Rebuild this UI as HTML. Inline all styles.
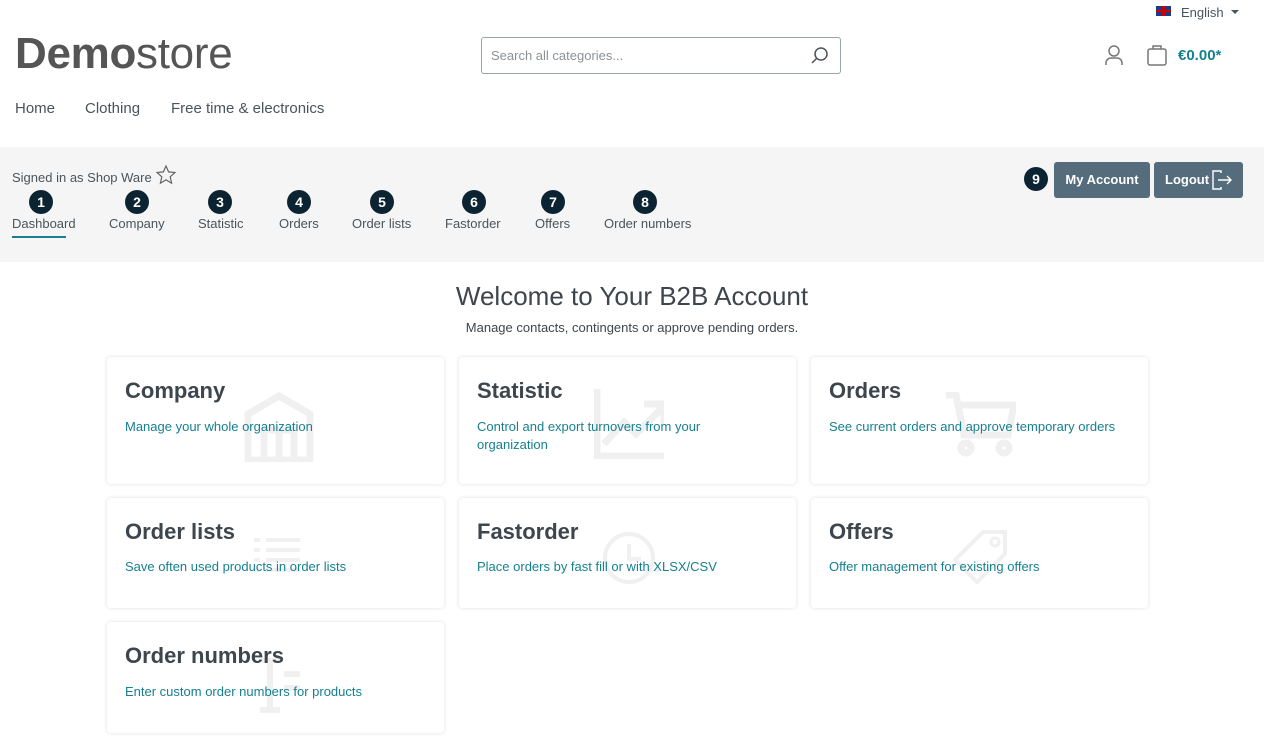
<!DOCTYPE html>
<html><head><meta charset="utf-8"><style>
*{box-sizing:border-box;margin:0;padding:0}
body{width:1264px;height:744px;overflow:hidden;background:#fff;font-family:"Liberation Sans",sans-serif;color:#4a545b;position:relative}
.a{position:absolute}
.logo{left:15px;top:29px;font-size:44px;color:#555;letter-spacing:-0.3px}
.logo b{font-weight:bold}
.nav{top:100px;font-size:15px;color:#4a545b}
.search{left:481px;top:37px;width:360px;height:37px;border:1px solid #9ba3a9;border-radius:3px;font-size:13px;color:#8a9196;padding:10px 9px}
.band{left:0;top:147px;width:1264px;height:115px;background:#f5f5f5}
.badge{width:24px;height:24px;border-radius:50%;background:#0c2431;color:#fff;font-weight:bold;font-size:14px;text-align:center;line-height:24px}
.tab{font-size:13px;top:216px;color:#4a545b}
.btn{top:162px;height:36px;background:#546c7c;color:#fff;font-weight:bold;font-size:13px;border-radius:3px;line-height:36px;text-align:center}
.card{background:#fff;border-radius:4px;box-shadow:0 0 4px rgba(0,0,0,.13);width:337px;overflow:hidden}
.card h3{position:absolute;left:18px;top:21px;font-size:22px;font-weight:bold;color:#3d464d}
.card p{position:absolute;left:18px;font-size:13px;color:#17808f;line-height:18px}
.card svg{position:absolute;stroke:#f0f0f0;fill:none;stroke-width:7}
</style></head><body>
<div class="a" style="left:1156px;top:6px;width:15px;height:10px;background:#1a3a8a"><div style="position:absolute;left:6px;top:0;width:3px;height:10px;background:#c00"></div><div style="position:absolute;left:0;top:4px;width:15px;height:2px;background:#c00"></div></div>
<div class="a" style="left:1181px;top:5px;font-size:13px;color:#4a545b">English</div>
<div class="a" style="left:1231px;top:10px;border:4px solid transparent;border-top:4px solid #4a545b"></div>
<div class="a logo"><b>Demo</b>store</div>
<div class="a search">Search all categories...</div>
<svg class="a" style="left:810px;top:46px" width="20" height="20" viewBox="0 0 20 20" fill="none" stroke="#4a545b" stroke-width="1.5"><circle cx="11" cy="8" r="6"/><path d="M7 12l-5 5"/></svg>
<svg class="a" style="left:1103px;top:44px" width="22" height="22" viewBox="0 0 22 22" fill="none" stroke="#777" stroke-width="1.5"><circle cx="11" cy="7" r="5"/><path d="M3 21v-2a5 5 0 0 1 5-5h6a5 5 0 0 1 5 5v2"/></svg>
<svg class="a" style="left:1146px;top:43px" width="22" height="24" viewBox="0 0 22 24" fill="none" stroke="#777" stroke-width="1.5"><rect x="2" y="6" width="18" height="16" rx="2"/><path d="M7 6V3h8v3"/></svg>
<div class="a" style="left:1178px;top:47px;font-size:15px;font-weight:bold;color:#17808f">€0.00*</div>
<div class="a nav" style="left:15px">Home</div>
<div class="a nav" style="left:85px">Clothing</div>
<div class="a nav" style="left:171px">Free time &amp; electronics</div>
<div class="a band"></div>
<div class="a" style="left:12px;top:170px;font-size:13px">Signed in as Shop Ware</div>
<svg class="a" style="left:156px;top:165px" width="20" height="20" viewBox="0 0 20 20" fill="none" stroke="#666" stroke-width="1.2"><path d="M10 1l2.6 5.9 6.4.6-4.8 4.3 1.4 6.3L10 14.8 4.4 18.1l1.4-6.3L1 7.5l6.4-.6z"/></svg>
<div class="a badge" style="left:29px;top:190px">1</div><div class="a tab" style="left:12px">Dashboard</div>
<div class="a" style="left:12px;top:236px;width:54px;height:2px;background:#17808f"></div>
<div class="a badge" style="left:125px;top:190px">2</div><div class="a tab" style="left:109px">Company</div>
<div class="a badge" style="left:208px;top:190px">3</div><div class="a tab" style="left:198px">Statistic</div>
<div class="a badge" style="left:287px;top:190px">4</div><div class="a tab" style="left:279px">Orders</div>
<div class="a badge" style="left:370px;top:190px">5</div><div class="a tab" style="left:352px">Order lists</div>
<div class="a badge" style="left:462px;top:190px">6</div><div class="a tab" style="left:445px">Fastorder</div>
<div class="a badge" style="left:541px;top:190px">7</div><div class="a tab" style="left:535px">Offers</div>
<div class="a badge" style="left:633px;top:190px">8</div><div class="a tab" style="left:604px">Order numbers</div>
<div class="a badge" style="left:1024px;top:167px">9</div>
<div class="a btn" style="left:1054px;width:96px">My Account</div>
<div class="a btn" style="left:1154px;width:89px;text-align:left;padding-left:11px">Logout</div>
<svg class="a" style="left:1211px;top:169px" width="22" height="22" viewBox="0 0 22 22" fill="none" stroke="#fff" stroke-width="1.4"><path d="M10 4V2H2v18h8v-2M7 11h13M16 7l4 4-4 4"/></svg>
<div class="a" style="left:0;top:281px;width:1264px;text-align:center;font-size:26px;color:#3d464d">Welcome to Your B2B Account</div>
<div class="a" style="left:0;top:320px;width:1264px;text-align:center;font-size:13px;color:#3d464d">Manage contacts, contingents or approve pending orders.</div>

<div class="a card" style="left:107px;top:357px;height:127px"><svg style="left:137px;top:35px" width="70" height="70" viewBox="0 0 70 70"><path d="M4 68V22L35 4l31 18v46H4zM20 68V38h30v30M35 40v28"/></svg><h3>Company</h3><p style="top:61px">Manage your whole organization</p></div>
<div class="a card" style="left:459px;top:357px;height:127px"><svg style="left:135px;top:32px" width="70" height="70" viewBox="0 0 70 70"><path d="M3 0v67h67M10 55l20-22 12 12 26-26M50 15h20v20"/></svg><h3>Statistic</h3><p style="top:61px">Control and export turnovers from your<br>organization</p></div>
<div class="a card" style="left:811px;top:357px;height:127px"><svg style="left:133px;top:35px" width="72" height="65" viewBox="0 0 72 65"><path d="M2 3h10l8 40h44l6-30H15"/><circle cx="22" cy="56" r="5"/><circle cx="60" cy="56" r="5"/></svg><h3>Orders</h3><p style="top:61px">See current orders and approve temporary orders</p></div>
<div class="a card" style="left:107px;top:498px;height:110px"><svg style="left:145px;top:38px" width="50" height="40" viewBox="0 0 50 40"><path d="M2 4h6M14 4h34M2 14h6M14 14h34M2 24h6M14 24h34M2 34h6M14 34h34" stroke-width="4"/></svg><h3>Order lists</h3><p style="top:60px">Save often used products in order lists</p></div>
<div class="a card" style="left:459px;top:498px;height:110px"><svg style="left:142px;top:32px" width="56" height="56" viewBox="0 0 56 56"><circle cx="28" cy="28" r="24" stroke-width="4"/><path d="M28 14v15h12" stroke-width="4"/></svg><h3>Fastorder</h3><p style="top:60px">Place orders by fast fill or with XLSX/CSV</p></div>
<div class="a card" style="left:811px;top:498px;height:110px"><svg style="left:142px;top:30px" width="56" height="56" viewBox="0 0 56 56"><path d="M30 4h22v22L24 54 2 32z" stroke-width="4"/><circle cx="42" cy="14" r="4" stroke-width="3"/></svg><h3>Offers</h3><p style="top:60px">Offer management for existing offers</p></div>
<div class="a card" style="left:107px;top:622px;height:111px"><svg style="left:145px;top:36px" width="55" height="55" viewBox="0 0 55 55"><path d="M8 2h20M18 2v50M8 52h20M32 16h16M32 30h16" stroke-width="6"/></svg><h3>Order numbers</h3><p style="top:61px">Enter custom order numbers for products</p></div>
</body></html>
